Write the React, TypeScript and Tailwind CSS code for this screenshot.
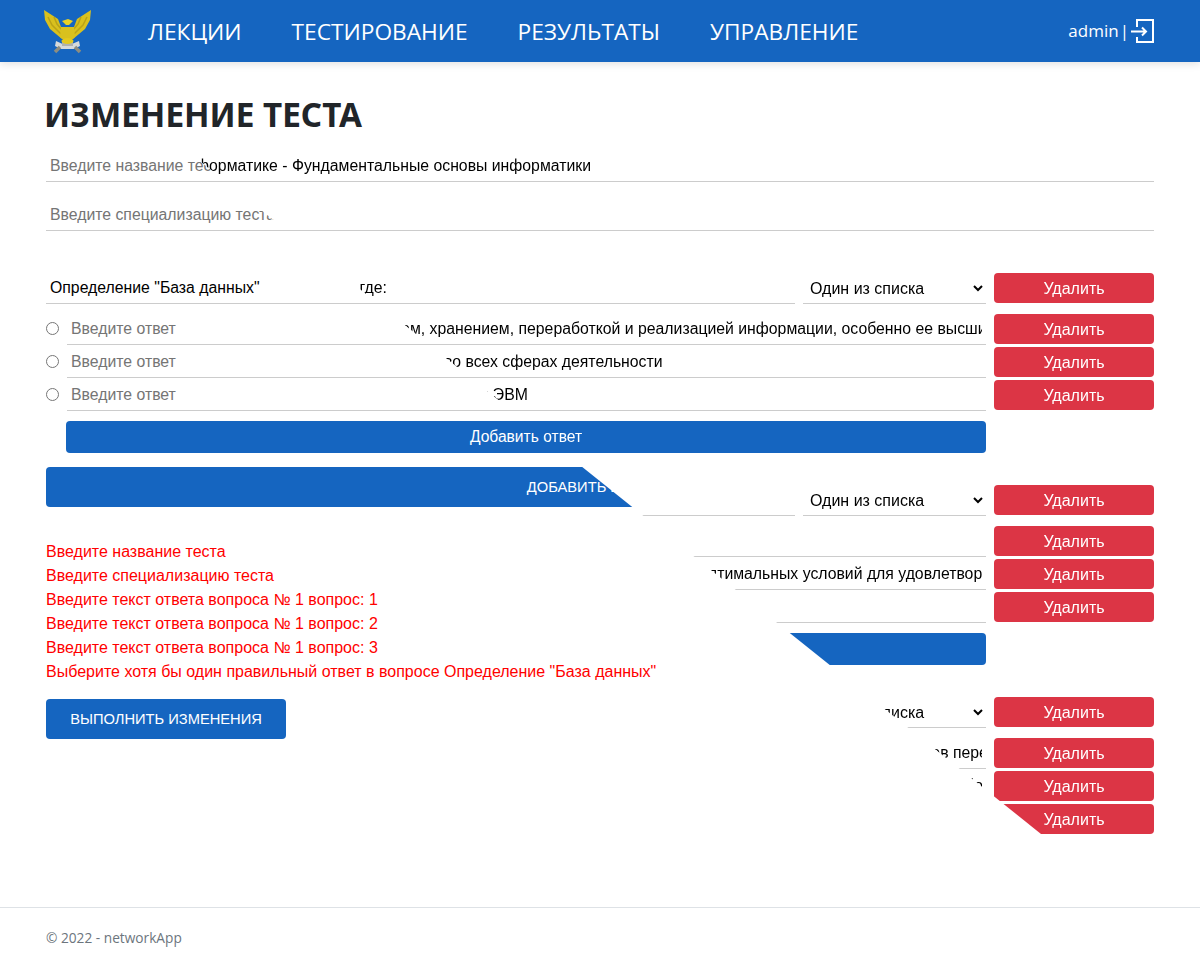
const navItems = ["ЛЕКЦИИ", "ТЕСТИРОВАНИЕ", "РЕЗУЛЬТАТЫ", "УПРАВЛЕНИЕ"];

const errors = [
  "Введите название теста",
  "Введите специализацию теста",
  "Введите текст ответа вопроса № 1 вопрос: 1",
  "Введите текст ответа вопроса № 1 вопрос: 2",
  "Введите текст ответа вопроса № 1 вопрос: 3",
  'Выберите хотя бы один правильный ответ в вопросе Определение "База данных"',
];

const questions = [
  {
    text: 'Определение "База данных" - это список, где:',
    answers: [
      "Раздел науки, связанная с получением, сбором, хранением, переработкой и реализацией информации, особенно ее высших форм",
      "Совокупность данных, используемых практически во всех сферах деятельности",
      "Наборы разных программ, работающих на современных ЭВМ",
    ],
  },
  {
    text: "Цель информатизации общества заключается в:",
    answers: [
      "Справочная служба",
      "Процесс информатизации общества заключается в их последовательном созидании оптимальных условий для удовлетворения информационных потребностей",
      "Справочник",
    ],
  },
  {
    text: "Данные это:",
    answers: [
      "Зарегистрированные на их носителях сигналы, которые можно хранить и передавать и обрабатывать в виде символов перед выводом",
      "Текст, пригодный для работы и хранения на компьютере, а также передачи по сети, представленный в удобном для обработки виде",
      "Набор",
    ],
  },
];

function Logo() {
  return (
    <svg width="50" height="46" viewBox="0 0 50 46" className="shrink-0">
      <path d="M2 2 L16 11 L19 19 L32 19 L35 11 L49 2 L48 12 L43 21 L31 31 L20 31 L8 21 L3 12 Z" fill="#d9c11e" />
      <path d="M6 9 L10 17 L19 26 M12 9 L15 16 L20 22 M45 9 L41 17 L32 26 M39 9 L36 16 L31 22" stroke="#ad9614" strokeWidth="1.5" fill="none" opacity="0.7" />
      <path d="M20 13 L26 11 L31 13 L27 17 L24 17 Z" fill="#e8d125" />
      <path d="M19 19 L32 19 L33 29 L26 35 L18 29 Z" fill="#d9c11e" />
      <path d="M14 33 L25 38 L37 33 L38 38 L32 41 L19 41 L13 38 Z" fill="#d6dadb" />
      <path d="M20 34 L31 34 L31 38 L20 38 Z" fill="#aeb2ae" />
      <path d="M18 39 L13 44 M33 39 L38 44" stroke="#8d8d80" strokeWidth="3.5" />
      <ellipse cx="25.5" cy="33" rx="6" ry="3" fill="#e3c91f" />
    </svg>
  );
}

function LogoutIcon() {
  return (
    <svg width="23" height="24" viewBox="0 0 23 24" className="shrink-0 mb-[1px]" fill="none" stroke="white" strokeWidth="2">
      <path d="M6 8 V1 H22 V23 H6 V18" />
      <path d="M0 12.5 H15 M11 8.5 L15 12.5 L11 16.5" />
    </svg>
  );
}

function Header() {
  return (
    <header className="h-[62px] bg-[#1565c0] shadow-[0_2px_8px_rgba(0,0,0,0.12)] flex items-center pl-[42px] pr-[46px] font-['Open_Sans',sans-serif] text-white">
      <Logo />
      <nav className="flex gap-[50px] ml-[56px] pt-[3px] text-[22.7px]">
        {navItems.map((item) => (
          <a key={item}>{item}</a>
        ))}
      </nav>
      <div className="ml-auto flex items-center text-[17px]">
        <span>admin</span>
        <span className="ml-[1px] mr-[2px]">|</span>
        <LogoutIcon />
      </div>
    </header>
  );
}

function TextField({
  value,
  placeholder,
  className,
}: {
  value?: string;
  placeholder?: string;
  className?: string;
}) {
  return (
    <input
      readOnly
      value={value ?? ""}
      placeholder={placeholder}
      className={`h-[31px] border-b border-[#cccccc] px-1 text-black text-[15.8px] placeholder:text-[#757575] outline-none ${className ?? ""}`}
    />
  );
}

function DeleteButton() {
  return (
    <button className="w-[160px] h-[30px] pt-[2px] shrink-0 rounded-[4px] bg-[#dc3545] text-white text-center">
      Удалить
    </button>
  );
}

function QuestionBlock({ text, answers }: { text: string; answers: string[] }) {
  return (
    <div>
      <div className="flex h-[30px] gap-[8px]">
        <TextField value={text} className="w-[749px]" />
        <select className="w-[183px] h-[31px] border-b border-[#cccccc] pl-[3px] pr-1 text-black outline-none">
          <option>Один из списка</option>
        </select>
        <DeleteButton />
      </div>
      <div className="mt-[11px] flex flex-col gap-[3px]">
        {answers.map((answer, i) => (
          <div key={i} className="flex h-[30px]">
            <input type="radio" readOnly className="w-[13px] h-[13px] mt-[8px] mr-[8px] shrink-0" />
            <TextField value={answer} placeholder="Введите ответ" className="w-[919px]" />
            <div className="ml-[8px]">
              <DeleteButton />
            </div>
          </div>
        ))}
      </div>
      <button className="block mt-[11px] ml-[20px] w-[920px] h-[32px] rounded-[4px] bg-[#1565c0] text-white text-[15.6px]">
        Добавить ответ
      </button>
    </div>
  );
}

function TestFields({ name, speciality }: { name?: string; speciality?: string }) {
  return (
    <div className="flex flex-col gap-[18px]">
      <TextField value={name} placeholder="Введите название теста" className="w-full" />
      <TextField value={speciality} placeholder="Введите специализацию теста" className="w-full" />
    </div>
  );
}

function EmptyForm() {
  return (
    <div className="min-h-[960px] flex flex-col">
      <Header />
      <main className="flex-1 px-[46px]">
        <h1 className="h-[89px] pt-[32px] -ml-[2px] font-['Noto_Sans',sans-serif] font-bold text-[33.2px] leading-[42px] text-[#212529]">
          ИЗМЕНЕНИЕ ТЕСТА
        </h1>
        <TestFields />
        <div className="mt-[42px]">
          <QuestionBlock text={'Определение "База данных"'} answers={["", "", ""]} />
        </div>
        <button className="block mt-[14px] w-full h-[40px] rounded-[4px] bg-[#1565c0] text-white text-[14.7px]">
          ДОБАВИТЬ ВОПРОС
        </button>
        <ul className="mt-[33px] text-[#ff0000] leading-[24px]">
          {errors.map((error) => (
            <li key={error}>{error}</li>
          ))}
        </ul>
        <button className="block mt-[15px] w-[240px] h-[40px] rounded-[4px] bg-[#1565c0] text-white text-[14.7px]">
          ВЫПОЛНИТЬ ИЗМЕНЕНИЯ
        </button>
      </main>
      <footer className="h-[53px] border-t border-[#dee2e6] pl-[46px] pt-[21px] font-['Open_Sans',sans-serif] text-[13.7px] leading-[18px] text-[#6c757d]">
        © 2022 - networkApp
      </footer>
    </div>
  );
}

// filled frame of the page, shown above the window diagonal
function FilledForm() {
  return (
    <div className="absolute inset-0 bg-white pt-[151px] px-[46px] will-change-transform [clip-path:polygon(173.5px_140px,1200px_140px,1200px_850px,1061px_850px)]">
      <TestFields name="Тестирование по информатике - Фундаментальные основы информатики" speciality="Информатика" />
      <div className="mt-[42px] flex flex-col gap-[32px]">
        {questions.map((q) => (
          <QuestionBlock key={q.text} text={q.text} answers={q.answers} />
        ))}
      </div>
    </div>
  );
}

export default function App() {
  return (
    <div className="relative h-[960px] overflow-hidden bg-white font-['Liberation_Sans',sans-serif] text-[16px]">
      <EmptyForm />
      <FilledForm />
    </div>
  );
}
